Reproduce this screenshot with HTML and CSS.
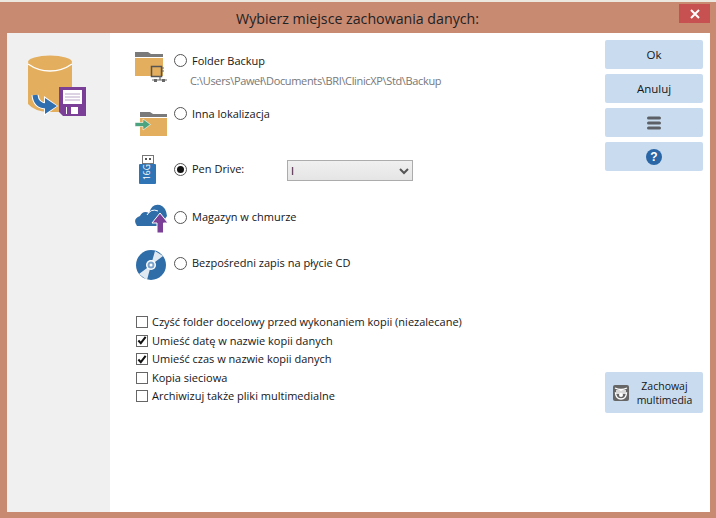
FILE: index.html
```html
<!DOCTYPE html>
<html lang="pl">
<head>
<meta charset="utf-8">
<title>Wybierz miejsce zachowania danych</title>
<link rel="stylesheet" href="styles.css">
</head>
<body>
<div class="window">
  <header class="titlebar">
    <h1 class="title">Wybierz miejsce zachowania danych:</h1>
    <button class="close" type="button" aria-label="Zamknij">
      <svg width="10" height="10" viewBox="0 0 10 10"><path d="M1 1L9 9M9 1L1 9" stroke="#fff" stroke-width="2"/></svg>
    </button>
  </header>
  <div class="client">
    <aside class="sidebar">
      <svg class="hero" width="60" height="62" viewBox="27 55 60 62">
        <path d="M28 63V104Q34 111 48 112H59V87H72V63Z" fill="#e3ae5e"/>
        <ellipse cx="50" cy="62" rx="22" ry="6.500" fill="#e3ae5e"/>
        <path d="M28 64Q38 71 50 71Q62 71 72 64" fill="none" stroke="#fff" stroke-width="1.500"/>
        <path d="M35 95Q36 106 47 106" fill="none" stroke="#fff" stroke-width="7"/>
        <path d="M44 96L58 106L44 116Z" fill="#fff"/>
        <path d="M35 95Q36 106 47 106" fill="none" stroke="#2f6fb0" stroke-width="5"/>
        <path d="M45 98L57 106L45 114Z" fill="#2f6fb0"/>
        <path d="M59 87H86V116H63L59 112Z" fill="#7b3f98"/>
        <rect x="63" y="90" width="19" height="14" fill="#fff"/>
        <path d="M65 94H80M65 97H80M65 100H80" stroke="#b9a6c8" stroke-width="1"/>
        <rect x="66" y="107" width="12" height="7" fill="#fff"/>
        <rect x="67" y="107" width="4" height="7" fill="#7b3f98"/>
      </svg>
    </aside>
    <main class="content">
      <section class="options">
        <div class="option row-folder">
          <svg class="icon" width="34" height="31" viewBox="134 52 34 31">
            <path d="M135 52H148L151 54H163V57H135Z" fill="#7a7a7a"/>
            <rect x="135" y="58" width="28" height="18" fill="#e3ae5e"/>
            <rect x="151.500" y="66.500" width="10" height="10" fill="#e3ae5e" stroke="#555" stroke-width="1.500"/>
            <path d="M162 68H164M162 71H164M160 76V80M152 80H167" stroke="#666" stroke-width="1.200"/>
            <rect x="154" y="79" width="3" height="3" fill="#666"/>
            <rect x="162" y="79" width="3" height="3" fill="#666"/>
          </svg>
          <input class="radio" type="radio" name="dest">
          <div class="option-text">
            <label class="label">Folder Backup</label>
            <p class="path">C:\Users\Paweł\Documents\BRI\ClinicXP\Std\Backup</p>
          </div>
        </div>
        <div class="option row-other">
          <svg class="icon" width="34" height="25" viewBox="134 112 34 25">
            <path d="M140 112H150L153 114H167V117H140Z" fill="#7a7a7a"/>
            <rect x="140" y="118" width="27" height="18" fill="#e3ae5e"/>
            <path d="M135 122.500H143V119L150.500 124.500L143 130V126.500H135Z" fill="#4ba37f" stroke="#fff" stroke-width="0.600"/>
          </svg>
          <input class="radio" type="radio" name="dest">
          <label class="label">Inna lokalizacja</label>
        </div>
        <div class="option row-pen">
          <svg class="icon" width="34" height="31" viewBox="134 155 34 31">
            <rect x="142.500" y="155.500" width="11" height="8" fill="#fff" stroke="#777"/>
            <rect x="145" y="158" width="2" height="2" fill="#555"/>
            <rect x="149" y="158" width="2" height="2" fill="#555"/>
            <rect x="139" y="164" width="17" height="20" rx="1" fill="#2f74b5"/>
            <text class="usb-text" x="0" y="0" transform="translate(150 180) rotate(-90)">16G</text>
          </svg>
          <input class="radio" type="radio" name="dest" checked>
          <label class="label pen-label">Pen Drive:</label>
          <div class="drive-wrap">
            <select class="drive"><option>I</option></select>
            <svg class="chevron" width="10" height="7" viewBox="0 0 10 7"><path d="M1 1L5 5L9 1" fill="none" stroke="#555" stroke-width="2"/></svg>
          </div>
        </div>
        <div class="option row-cloud">
          <svg class="icon" width="34" height="31" viewBox="134 203 34 31">
            <path d="M137 226Q132 219 140 216Q143 210 149 213Q152 203 160 205Q166 207 167 216L160 226Z" fill="#2f6da8"/>
            <path d="M147 215Q151 208 158 211" fill="none" stroke="#fff" stroke-width="1"/>
            <path d="M160 213L168 223H163.500V233H157V223H152Z" fill="#7b3f98" stroke="#fff" stroke-width="1"/>
          </svg>
          <input class="radio" type="radio" name="dest">
          <label class="label">Magazyn w chmurze</label>
        </div>
        <div class="option row-cd">
          <svg class="icon" width="34" height="31" viewBox="134 250 34 31">
            <circle cx="151" cy="265" r="15" fill="#2f6da8"/>
            <path d="M151 265L155 251L163 256ZM151 265L139 274L147 280Z" fill="#fff" opacity="0.850"/>
            <circle cx="151" cy="265" r="5" fill="#fff"/>
            <circle cx="151" cy="265" r="3.500" fill="#7ba3cb"/>
            <circle cx="151" cy="265" r="1.500" fill="#fff"/>
          </svg>
          <input class="radio" type="radio" name="dest">
          <label class="label">Bezpośredni zapis na płycie CD</label>
        </div>
      </section>
      <section class="checks">
        <div class="check"><span class="box"></span><span>Czyść folder docelowy przed wykonaniem kopii (niezalecane)</span></div>
        <div class="check"><span class="box"><svg width="11" height="11" viewBox="0 0 11 11"><path d="M1.500 5.500L4.200 8.500L9.500 1.500" fill="none" stroke="#111" stroke-width="2.200"/></svg></span><span>Umieść datę w nazwie kopii danych</span></div>
        <div class="check"><span class="box"><svg width="11" height="11" viewBox="0 0 11 11"><path d="M1.500 5.500L4.200 8.500L9.500 1.500" fill="none" stroke="#111" stroke-width="2.200"/></svg></span><span>Umieść czas w nazwie kopii danych</span></div>
        <div class="check"><span class="box"></span><span>Kopia sieciowa</span></div>
        <div class="check"><span class="box"></span><span>Archiwizuj także pliki multimedialne</span></div>
      </section>
    </main>
    <nav class="actions">
      <button class="btn" type="button">Ok</button>
      <button class="btn" type="button">Anuluj</button>
      <button class="btn" type="button" aria-label="Menu">
        <svg width="14" height="14" viewBox="0 0 14 14"><path d="M1.500 2H12.500M1.500 7H12.500M1.500 12H12.500" stroke="#5c6066" stroke-width="3" stroke-linecap="round"/></svg>
      </button>
      <button class="btn" type="button" aria-label="Pomoc">
        <span class="help">?</span>
      </button>
      <button class="btn btn-media" type="button">
        <svg width="16" height="16" viewBox="0 0 16 16">
          <rect width="16" height="16" rx="2" fill="#666"/>
          <path d="M2 3Q8 6 14 3M3 6H13M2.500 8Q3 14 8 14Q13 14 13.500 8Z" fill="none" stroke="#fff" stroke-width="1.300"/>
          <circle cx="8" cy="10" r="2" fill="#fff"/>
        </svg>
        <span class="media-text">Zachowaj<br>multimedia</span>
      </button>
    </nav>
  </div>
</div>
</body>
</html>
```
FILE: styles.css
```css
* { box-sizing: border-box; }
html, body { margin: 0; height: 100%; }
body { background: #c98a72; font-family: "Open Sans", "Noto Sans", sans-serif; font-size: 11px; color: #151515; overflow: hidden; }
.window { width: 716px; height: 518px; display: flex; flex-direction: column; border-top: 2px solid #ece8e0; padding: 0 6px 6px 7px; }
.titlebar { height: 31px; display: flex; justify-content: center; align-items: center; position: relative; }
.title { margin: 0; font-size: 14.2px; font-weight: 400; color: #222; padding: 1px 2px 0 0; }
.close { position: absolute; top: 2px; right: 0; width: 31px; height: 19px; margin: 0; padding: 0; border: 0; background: #c75050; display: flex; align-items: center; justify-content: center; }
.client { flex: 1; display: flex; background: #fff; }
.sidebar { width: 103px; background: #f0f0f0; padding: 22px 0 0 20px; }
.hero { display: block; }
.content { flex: 1; padding: 19px 0 0 24px; display: flex; flex-direction: column; }
.options { display: flex; flex-direction: column; }
.option { display: flex; align-items: flex-start; }
.icon { flex: none; display: block; margin-right: 6px; }
.row-folder { height: 53px; margin-top: 2px; }
.row-folder .icon { margin-top: -2px; }
.row-folder .label { margin-top: 0; }
.row-other { height: 56px; }
.row-other .icon { margin-top: 5px; }
.row-other .label { margin-top: 0; }
.row-pen { height: 48px; }
.row-pen .icon { margin-top: -8px; }
.row-cloud { height: 46px; }
.row-cloud .icon { margin-top: -8px; }
.row-cd { height: 45px; }
.row-cd .icon { margin-top: -7px; }
.radio { appearance: none; flex: none; width: 13px; height: 13px; margin: 0 5px 0 0; border: 1px solid #555; border-radius: 50%; background: #fff; display: flex; align-items: center; justify-content: center; }
.radio:checked::before { content: ""; width: 7px; height: 7px; border-radius: 50%; background: #111; }
.label { display: block; line-height: 14px; margin-top: -1px; }
.path { margin: 6px 0 0 -2px; color: #777; line-height: 14px; letter-spacing: -0.35px; white-space: nowrap; }
.pen-label { width: 95px; }
.drive-wrap { position: relative; width: 126px; height: 21px; margin-top: -3px; }
.drive { appearance: none; display: block; width: 100%; height: 100%; margin: 0; border: 1px solid #acacac; background: linear-gradient(#f0f0f0, #e5e5e5); font: inherit; color: #111; padding: 0 0 0 3px; border-radius: 0; }
.chevron { position: absolute; right: 4px; top: 8px; pointer-events: none; }
.usb-text { font-size: 8.5px; fill: #fff; font-family: "Open Sans", sans-serif; }
.checks { margin: 13px 0 0 2px; display: flex; flex-direction: column; gap: 4.5px; }
.check { display: flex; align-items: center; gap: 4px; height: 14px; line-height: 14px; white-space: nowrap; }
.box { flex: none; width: 12px; height: 12px; border: 1px solid #666; background: #fff; display: flex; align-items: center; justify-content: center; }
.actions { width: 105px; padding-top: 7px; display: flex; flex-direction: column; gap: 5px; }
.btn { width: 98px; height: 29px; flex: none; margin: 0; padding: 0; border: 0; border-radius: 2px; background: #c9dcef; font: inherit; font-size: 11.5px; color: #151515; display: flex; align-items: center; justify-content: center; }
.help { width: 16px; height: 16px; border-radius: 50%; background: #2a66a6; color: #fff; font-weight: 700; font-size: 12px; line-height: 16px; text-align: center; font-family: "Liberation Sans", sans-serif; }
.btn-media { height: 41px; margin-top: 196px; justify-content: flex-start; padding-left: 8px; gap: 7px; }
.media-text { font-size: 10.5px; line-height: 14px; text-align: center; width: 57px; }
```
